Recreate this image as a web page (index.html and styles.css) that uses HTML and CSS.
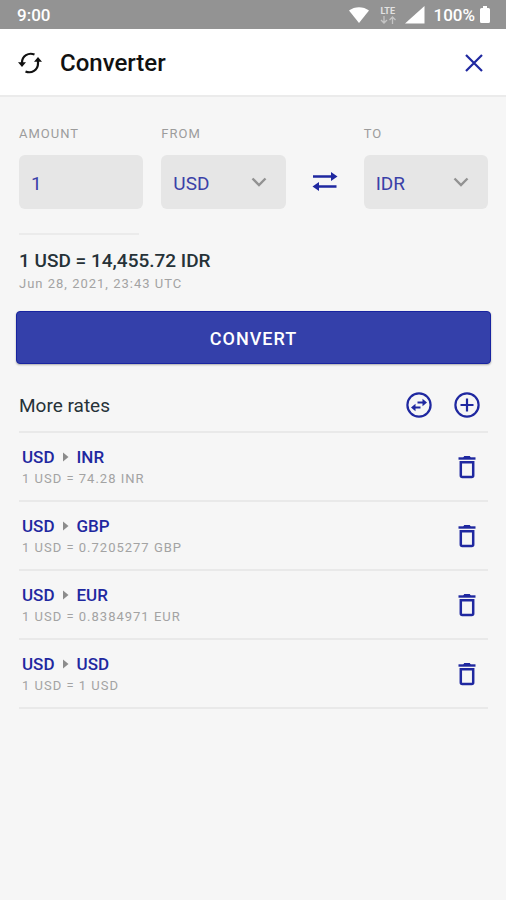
FILE: index.html
```html
<!DOCTYPE html>
<html lang="en">
<head>
    <meta charset="UTF-8">
    <meta name="viewport" content="width=device-width, initial-scale=1.0">
    <title>Converter</title>
    <link rel="stylesheet" href="styles.css">
</head>
<body>
    <!-- Shared icons -->
    <svg class="sprite" aria-hidden="true">
        <symbol id="icon-trash" viewBox="0 0 20 24">
            <path d="M1.500 3.500h17" fill="none" stroke="currentColor" stroke-width="2.400"/>
            <path d="M6 3l1.200-2h5.600L14 3z" fill="currentColor"/>
            <path d="M3.800 7.200h12.400v13.300a1.500 1.500 0 0 1-1.500 1.500H5.300a1.500 1.500 0 0 1-1.500-1.500z" fill="none" stroke="currentColor" stroke-width="2.500"/>
        </symbol>
        <symbol id="icon-chevron" viewBox="0 0 16 10">
            <path d="M1.500 1.500L8 8l6.500-6.500" fill="none" stroke="currentColor" stroke-width="2.400"/>
        </symbol>
        <symbol id="icon-caret" viewBox="0 0 6 10">
            <path d="M0 0.500L5.500 5L0 9.500z" fill="currentColor"/>
        </symbol>
    </svg>

    <div class="status-bar">
        <span class="time">9:00</span>
        <svg class="wifi" width="20" height="16" viewBox="0 0 20 16" fill="#fff">
            <path d="M0 3.500C5.500-1 14.500-1 20 3.500L10 16z"/>
        </svg>
        <div class="lte">
            <span>LTE</span>
            <svg width="16" height="8" viewBox="0 0 16 8" fill="none" stroke="#c4c4c4" stroke-width="1.300">
                <path d="M4 0v7M1 4l3 3l3-3M12.500 8V1M9.500 4l3-3l3 3"/>
            </svg>
        </div>
        <svg class="signal" width="20" height="18" viewBox="0 0 20 18" fill="#fff">
            <path d="M19.500 0v17.500H0z"/>
        </svg>
        <span class="battery-level">100%</span>
        <svg width="10" height="17" viewBox="0 0 10 17" fill="#fff">
            <path d="M3 0h4v2h1.500a1.500 1.500 0 0 1 1.500 1.500v12a1.500 1.500 0 0 1-1.500 1.500h-7A1.500 1.500 0 0 1 0 15.500v-12A1.500 1.500 0 0 1 1.500 2H3z"/>
        </svg>
    </div>

    <header class="header">
        <svg class="logo" width="24" height="22" viewBox="0 0 24 22" fill="none" stroke="#111" stroke-width="2.200">
            <path d="M16.500 2.600C10.500 0 4 4 4 10.500V12"/>
            <path d="M7.500 19.400C13.500 22 20 18 20 11.500V8.500"/>
            <path d="M0 10.200h8L4 15zM16 9.800h8L20 5z" fill="#111" stroke="none"/>
        </svg>
        <h1>Converter</h1>
        <button type="button" class="icon-btn" aria-label="Close">
            <svg width="18" height="18" viewBox="0 0 18 18" fill="none" stroke="currentColor" stroke-width="2.200">
                <path d="M1 1l16 16M17 1L1 17"/>
            </svg>
        </button>
    </header>

    <main>
        <form class="converter">
            <div class="fields">
                <div class="field">
                    <label for="amount">AMOUNT</label>
                    <input id="amount" type="text" inputmode="decimal" value="1">
                </div>
                <div class="field">
                    <label for="from">FROM</label>
                    <div class="select">
                        <select id="from">
                            <option>USD</option>
                            <option>IDR</option>
                        </select>
                        <svg width="16" height="10"><use href="#icon-chevron"/></svg>
                    </div>
                </div>
                <button type="button" class="swap" aria-label="Swap currencies">
                    <svg width="26" height="20" viewBox="0 0 26 20" fill="none" stroke="currentColor" stroke-width="2.400">
                        <path d="M1 4.500h19M6 14.500h18.500"/>
                        <path d="M19 0L25.500 4.500L19 9zM7 10L0.500 14.500L7 19z" fill="currentColor" stroke="none"/>
                    </svg>
                </button>
                <div class="field">
                    <label for="to">TO</label>
                    <div class="select">
                        <select id="to">
                            <option>IDR</option>
                            <option>USD</option>
                        </select>
                        <svg width="16" height="10"><use href="#icon-chevron"/></svg>
                    </div>
                </div>
            </div>

            <div class="result">
                <p class="result-value">1 USD = 14,455.72 IDR</p>
                <p class="result-date">Jun 28, 2021, 23:43 UTC</p>
            </div>

            <button type="button" class="convert">CONVERT</button>
        </form>

        <section class="rates">
            <div class="rates-header">
                <h2>More rates</h2>
                <button type="button" class="icon-btn" aria-label="Invert rates">
                    <svg width="26" height="26" viewBox="0 0 26 26" fill="none" stroke="currentColor" stroke-width="2.200">
                        <circle cx="13" cy="13" r="11.600"/>
                        <path d="M11.500 10.500H17M14.500 15.500H9"/>
                        <path d="M16.500 6.800L21 10.500L16.500 14.200zM9.500 11.800L5 15.500L9.500 19.200z" fill="currentColor" stroke="none"/>
                    </svg>
                </button>
                <button type="button" class="icon-btn" aria-label="Add rate">
                    <svg width="26" height="26" viewBox="0 0 26 26" fill="none" stroke="currentColor" stroke-width="2.200">
                        <circle cx="13" cy="13" r="11.600"/>
                        <path d="M13 6.500v13M6.500 13h13"/>
                    </svg>
                </button>
            </div>

            <ul class="rate-list">
                <li class="rate">
                    <div class="rate-info">
                        <p class="pair">USD <svg width="6" height="10"><use href="#icon-caret"/></svg> INR</p>
                        <p class="detail">1 USD = 74.28 INR</p>
                    </div>
                    <button type="button" class="icon-btn" aria-label="Delete USD to INR">
                        <svg width="20" height="24"><use href="#icon-trash"/></svg>
                    </button>
                </li>
                <li class="rate">
                    <div class="rate-info">
                        <p class="pair">USD <svg width="6" height="10"><use href="#icon-caret"/></svg> GBP</p>
                        <p class="detail">1 USD = 0.7205277 GBP</p>
                    </div>
                    <button type="button" class="icon-btn" aria-label="Delete USD to GBP">
                        <svg width="20" height="24"><use href="#icon-trash"/></svg>
                    </button>
                </li>
                <li class="rate">
                    <div class="rate-info">
                        <p class="pair">USD <svg width="6" height="10"><use href="#icon-caret"/></svg> EUR</p>
                        <p class="detail">1 USD = 0.8384971 EUR</p>
                    </div>
                    <button type="button" class="icon-btn" aria-label="Delete USD to EUR">
                        <svg width="20" height="24"><use href="#icon-trash"/></svg>
                    </button>
                </li>
                <li class="rate">
                    <div class="rate-info">
                        <p class="pair">USD <svg width="6" height="10"><use href="#icon-caret"/></svg> USD</p>
                        <p class="detail">1 USD = 1 USD</p>
                    </div>
                    <button type="button" class="icon-btn" aria-label="Delete USD to USD">
                        <svg width="20" height="24"><use href="#icon-trash"/></svg>
                    </button>
                </li>
            </ul>
        </section>
    </main>
</body>
</html>
```
FILE: styles.css
```css
* {
    margin: 0;
    padding: 0;
    box-sizing: border-box;
}

body {
    font-family: Roboto, "Liberation Sans", sans-serif;
    background: #f6f6f6;
    color: #263238;
    min-height: 100vh;
}

svg {
    display: block;
    flex-shrink: 0;
}

button, input, select {
    font-family: inherit;
    border: none;
    background: none;
}

button {
    cursor: pointer;
}

.sprite {
    display: none;
}

/* Status bar */
.status-bar {
    display: flex;
    align-items: center;
    height: 29px;
    padding: 0 16px 0 17px;
    background: #939393;
    color: #fff;
    font-size: 17px;
    font-weight: 500;
}

.time {
    margin-right: auto;
}

.lte {
    margin: 0 9px 0 11px;
    color: #e2e2e2;
    font-size: 9px;
    line-height: 10px;
    font-weight: 700;
}

.battery-level {
    margin: 0 5px 0 8px;
}

/* Header */
.header {
    display: flex;
    align-items: center;
    height: 68px;
    padding: 2px 18px 0;
    background: #fff;
    border-bottom: 2px solid #ebebeb;
}

h1 {
    flex: 1;
    margin-left: 18px;
    color: #111;
    font-size: 24px;
    font-weight: 500;
}

.icon-btn {
    display: flex;
    align-items: center;
    justify-content: center;
    width: 28px;
    height: 28px;
    color: #1f28a0;
}

/* Form */
.converter {
    padding: 28px 15px 0 16px;
}

.fields {
    display: grid;
    grid-template-columns: 1fr 1fr 42px 1fr;
    gap: 18px;
    align-items: end;
    padding: 0 3px;
}

.field label {
    display: block;
    margin-bottom: 12px;
    color: #9c9c9c;
    font-size: 13px;
    line-height: 18px;
    letter-spacing: 1px;
}

.field input,
.field select {
    display: block;
    width: 100%;
    height: 54px;
    padding: 2px 12px 0;
    border-radius: 6px;
    background: #e6e6e6;
    color: #3a41a8;
    font-size: 19px;
    appearance: none;
}

.select {
    display: grid;
    align-items: center;
}

.select select,
.select svg {
    grid-area: 1 / 1;
}

.select svg {
    justify-self: end;
    margin-right: 19px;
    color: #929292;
    pointer-events: none;
}

.swap {
    display: flex;
    align-items: center;
    justify-content: center;
    height: 54px;
    color: #1f28a0;
}

.result {
    padding: 24px 3px 0;
}

.result::before {
    content: "";
    display: block;
    width: 120px;
    height: 2px;
    margin-bottom: 13px;
    background: #ebebeb;
}

.result-value {
    font-size: 19px;
    line-height: 26px;
    font-weight: 500;
}

.result-date {
    color: #a3a3a3;
    font-size: 13px;
    line-height: 20px;
    letter-spacing: 1px;
}

.convert {
    display: block;
    width: 100%;
    height: 53px;
    margin-top: 17px;
    padding-top: 2px;
    border: 1px solid #1824a0;
    border-radius: 4px;
    background: #3440aa;
    box-shadow: 0 1px 2px rgba(0, 0, 0, 0.3);
    color: #fff;
    font-size: 18px;
    font-weight: 500;
    letter-spacing: 1px;
}

/* More rates */
.rates {
    padding: 13px 18px 0 19px;
}

.rates-header {
    display: flex;
    align-items: center;
    gap: 20px;
    height: 56px;
    padding: 2px 7px 0 0;
    border-bottom: 2px solid #e9e9e9;
}

h2 {
    flex: 1;
    font-size: 19px;
    font-weight: 400;
}

.rate-list {
    list-style: none;
}

.rate {
    display: flex;
    align-items: center;
    justify-content: space-between;
    height: 69px;
    padding: 0 7px 0 3px;
    border-bottom: 2px solid #e9e9e9;
}

.pair {
    display: flex;
    align-items: center;
    gap: 8px;
    color: #1f28a0;
    font-size: 17px;
    line-height: 24px;
    font-weight: 500;
}

.pair svg {
    color: #8c8c8c;
}

.detail {
    color: #a3a3a3;
    font-size: 13px;
    line-height: 20px;
    letter-spacing: 1px;
}
```
